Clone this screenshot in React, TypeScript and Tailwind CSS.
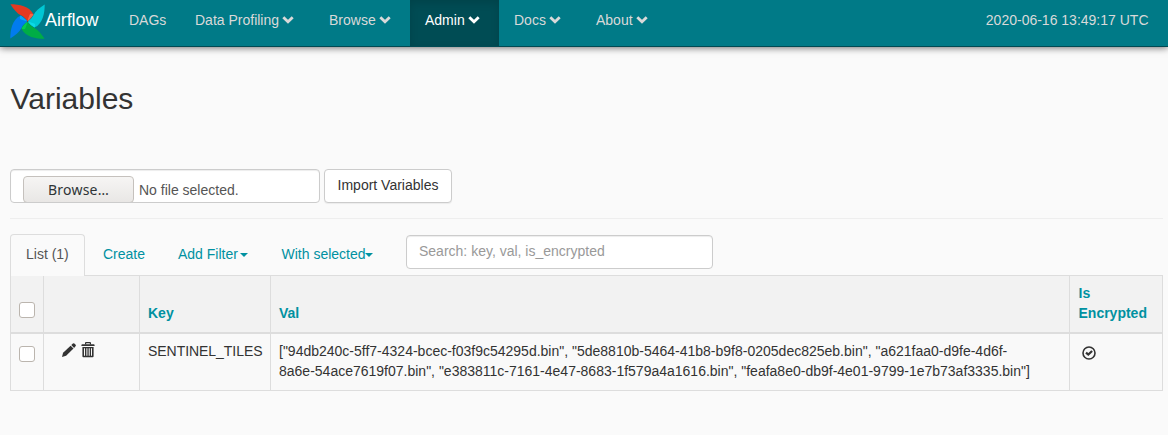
import React from 'react';

const Chevron = () => (
  <svg className="ml-[3px] mt-px h-[10px] w-[12px] shrink-0" viewBox="0 0 12 10" fill="none" stroke="currentColor" strokeWidth="2.8">
    <path d="M1.3 2.2 L6 6.8 L10.7 2.2" />
  </svg>
);

const petals = [
  { angle: 0, main: '#e43921', fold: '#ff7557' },
  { angle: 90, main: '#00c7d4', fold: '#11e1ee' },
  { angle: 180, main: '#00ad46', fold: '#04d659' },
  { angle: 270, main: '#017cee', fold: '#0cb6ff' },
];

const Logo = () => (
  <svg className="ml-[10px] mt-[4px] h-[35px] w-[35px] shrink-0" viewBox="0 0 35 35">
    {petals.map((p) => (
      <g key={p.angle} transform={`rotate(${p.angle} 17.5 17.5)`}>
        <path d="M17.5 17.5 C15.5 14.5 13.5 12.4 11.3 11.6 C7 9.6 3.8 5.4 .4 .3 C9 .3 19.5 2 23.6 10.6 C22 13 20 15.5 17.5 17.5Z" fill={p.main} />
        <path d="M17.5 17.5 C18.2 14.5 19 12 20 10 C21.2 9.7 22.6 9.8 23.6 10.6 C22 13 20 15.5 17.5 17.5Z" fill={p.fold} fillOpacity=".7" />
      </g>
    ))}
    <circle cx="17.5" cy="17.5" r=".8" fill="#51504f" />
  </svg>
);

const Pencil = () => (
  <svg className="h-[14px] w-[14px]" viewBox="0 0 14 14" fill="currentColor">
    <path d="M0 14 L1.1 9.8 L8.6 2.7 L11.5 5.6 L4.1 12.7Z" />
    <path d="M9.3 2.1 L10.9 .6 Q11.8 -.1 12.7 .8 L13.4 1.5 Q14.3 2.4 13.5 3.3 L12.1 4.9Z" />
  </svg>
);

const Trash = () => (
  <svg className="h-[16px] w-[14px]" viewBox="0 0 14 16" fill="currentColor">
    <path d="M4 2.6 V1 Q4 0 5 0 H9 Q10 0 10 1 V2.6 H8.8 V1.2 H5.2 V2.6Z" />
    <path d="M.4 4 V3.2 Q.4 2.3 1.4 2.3 H12.6 Q13.6 2.3 13.6 3.2 V4Z" />
    <path fillRule="evenodd" d="M1.4 5 H12.6 V14.2 Q12.6 15.2 11.6 15.2 H2.4 Q1.4 15.2 1.4 14.2Z M3 6.2 V13.8 H4 V6.2Z M5.4 6.2 V13.8 H6.4 V6.2Z M7.7 6.2 V13.8 H8.7 V6.2Z M10 6.2 V13.8 H11 V6.2Z" />
  </svg>
);

const CheckCircle = () => (
  <svg className="h-[14px] w-[14px]" viewBox="0 0 14 14" fill="none" stroke="currentColor">
    <circle cx="7" cy="7" r="6" strokeWidth="1.6" />
    <path d="M4 6.6 L6.3 8.6 L10.1 5" strokeWidth="2.2" />
  </svg>
);

const Caret = () => (
  <svg className="h-[4px] w-[8px]" viewBox="0 0 8 4" fill="currentColor">
    <path d="M0 0H8L4 4Z" />
  </svg>
);

const Checkbox = () => (
  <span className="block h-4 w-4 rounded-[3px] border border-[#bbb5ae] bg-white" />
);

const navItems = [
  { label: 'DAGs', width: 'w-[66px]', menu: false },
  { label: 'Data Profiling', width: 'w-[134px]', menu: true },
  { label: 'Browse', width: 'w-[96px]', menu: true },
  { label: 'Admin', width: 'w-[89px]', menu: true, active: true },
  { label: 'Docs', width: 'w-[82px]', menu: true },
  { label: 'About', width: 'w-[82px]', menu: true },
];

export default function App() {
  return (
    <div className="min-h-[435px] w-[1168px] bg-[#fafafa] font-['Liberation_Sans',Arial,sans-serif] text-[14px] leading-[20px] text-[#333]">
      <nav className="flex h-[47px] border-b border-[#004a53] bg-[#007a87] text-[#d9d9d9] shadow-[0_1px_7px_rgba(0,0,0,0.55)]">
        <div className="flex w-[114px]">
          <Logo />
          <span className="mt-[10px] text-[18px] tracking-[-0.1px] text-white">Airflow</span>
        </div>
        {navItems.map((item) => (
          <div
            key={item.label}
            className={`flex h-[46px] items-start whitespace-nowrap pl-[15px] pt-[10px] ${item.width} ${
              item.active ? 'bg-[#004c54] text-white shadow-[inset_0_3px_8px_rgba(0,0,0,0.125)]' : ''
            }`}
          >
            {item.label}
            {item.menu && <span className="mt-[4px]"><Chevron /></span>}
          </div>
        ))}
        <span className="ml-auto mr-[19.5px] mt-[10px]">2020-06-16 13:49:17 UTC</span>
      </nav>

      <main className="pl-[10px]">
        <h1 className="pl-[0.5px] pt-[35px] text-[30px] leading-[33px]">Variables</h1>

        <div className="mt-[54px] flex gap-[4px]">
          <div className="flex h-[34px] w-[310px] overflow-hidden rounded-[4px] border border-[#ccc] bg-white pl-[12px] pt-[6px] text-[#555] shadow-[inset_0_1px_1px_rgba(0,0,0,0.075)]">
            <span className="flex h-[27px] w-[111px] items-center justify-center rounded-[4px] border border-[#c5c1bd] bg-linear-to-b from-[#f6f5f4] to-[#e9e7e5] font-['Noto_Sans',sans-serif] tracking-[0.2px] text-[#2e3436]">
              Browse…
            </span>
            <span className="ml-[5px] mt-[4px]">No file selected.</span>
          </div>
          <button className="flex h-[34px] w-[128px] justify-center rounded-[4px] border border-[#ccc] bg-white pt-[5px] shadow-[0_1px_1px_rgba(0,0,0,0.06)]">
            Import Variables
          </button>
        </div>

        <div className="mt-[15px] w-[1153px] border-t border-[#eee]" />

        <div className="mt-[15px] flex h-[42px] w-[1153px] border-b border-[#ddd] text-[#0091a1]">
          <div className="h-[42px] w-[75px] rounded-t-[4px] border border-b-0 border-[#ddd] bg-[#fafafa] pl-[15px] pt-[9px] text-[#555]">List (1)</div>
          <span className="w-[75px] pl-[18px] pt-[10px]">Create</span>
          <span className="flex w-[104px] pl-[18px] pt-[10px]">Add Filter<span className="ml-[2px] mt-[9px]"><Caret /></span></span>
          <span className="flex w-[142px] whitespace-nowrap pl-[17.5px] pt-[10px]">With selected<span className="-ml-[0.5px] mt-[9px]"><Caret /></span></span>
          <input
            className="mt-[1px] h-[34px] w-[307px] rounded-[4px] border border-[#ccc] bg-white px-[12px] pb-[2px] shadow-[inset_0_1px_1px_rgba(0,0,0,0.075)] placeholder:text-[#999]"
            placeholder="Search: key, val, is_encrypted"
          />
        </div>

        <div className="w-[1153px] border-l border-[#ddd]">
          <div className="grid h-[58px] grid-cols-[33px_96px_131px_799px_93px] border-b-2 border-[#ddd] bg-[#f2f2f2] font-bold text-[#0091a1] *:border-r *:border-[#ddd]">
            <div className="pl-[8px] pt-[26px]"><Checkbox /></div>
            <div />
            <div className="pl-[8px] pt-[27px]">Key</div>
            <div className="pl-[8px] pt-[27px]">Val</div>
            <div className="pl-[8.5px] pt-[7px]">Is<br />Encrypted</div>
          </div>
          <div className="grid h-[57px] grid-cols-[33px_96px_131px_799px_93px] border-b border-[#ddd] bg-[#f9f9f9] *:border-r *:border-[#ddd]">
            <div className="pl-[8px] pt-[12px]"><Checkbox /></div>
            <div className="flex gap-[5px] pl-[18px] pt-[8px]">
              <span className="pt-[1px]"><Pencil /></span>
              <Trash />
            </div>
            <div className="pl-[8px] pt-[7px] tracking-[-0.05px]">SENTINEL_TILES</div>
            <div className="whitespace-nowrap pl-[8px] pt-[7px]">
              ["94db240c-5ff7-4324-bcec-f03f9c54295d.bin", "5de8810b-5464-41b8-b9f8-0205dec825eb.bin", "a621faa0-d9fe-4d6f-
              <br />
              8a6e-54ace7619f07.bin", "e383811c-7161-4e47-8683-1f579a4a1616.bin", "feafa8e0-db9f-4e01-9799-1e7b73af3335.bin"]
            </div>
            <div className="pl-[11.5px] pt-[12px]"><CheckCircle /></div>
          </div>
        </div>
      </main>
    </div>
  );
}
